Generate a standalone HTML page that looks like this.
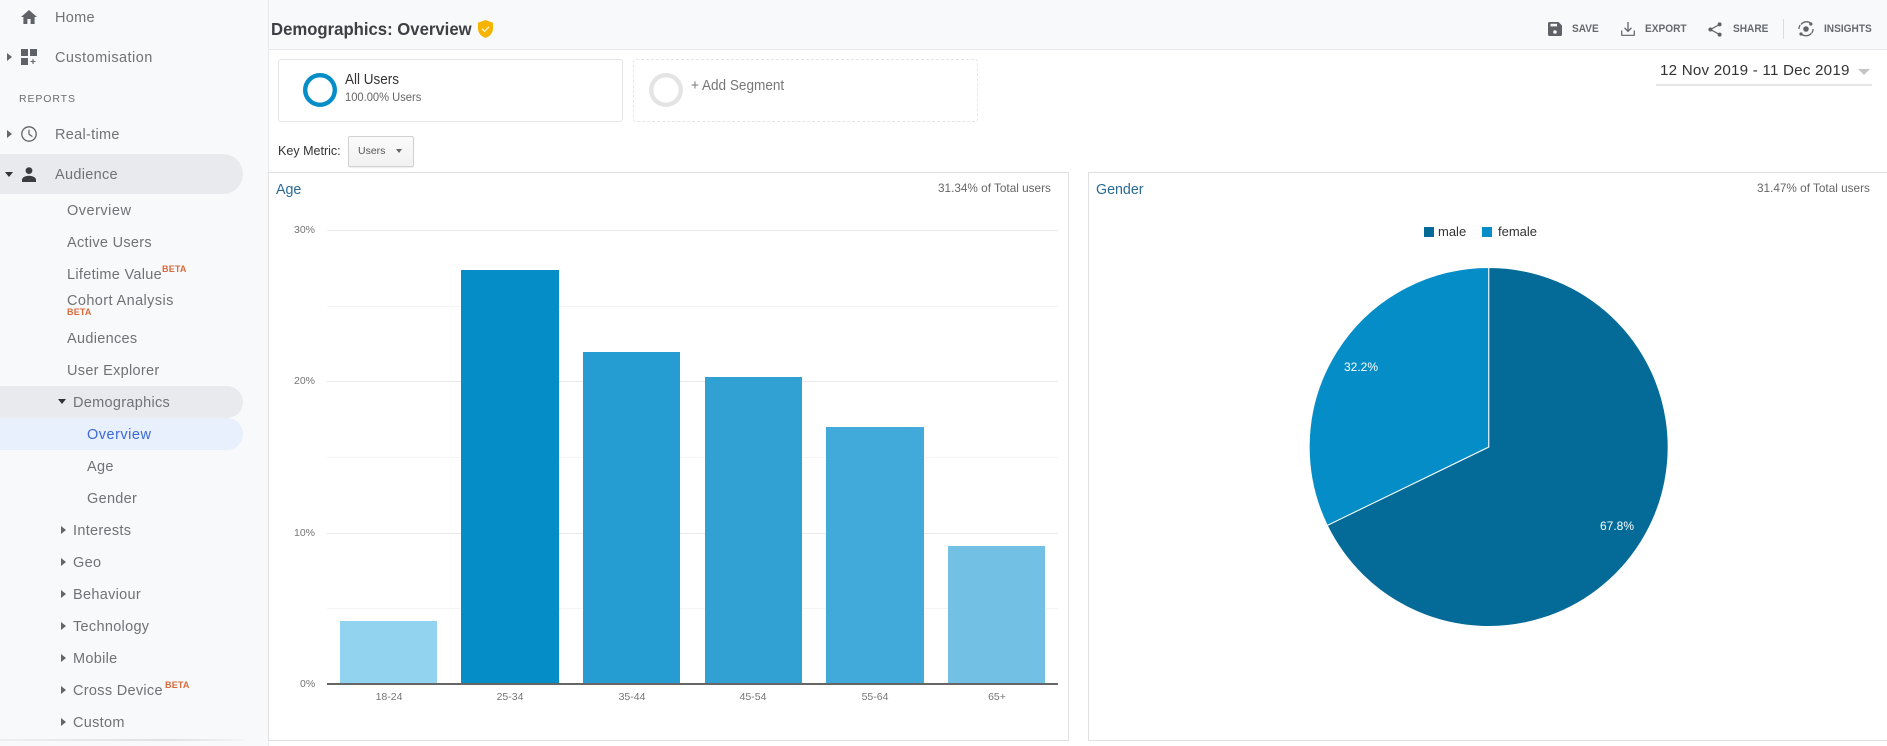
<!DOCTYPE html>
<html><head><meta charset="utf-8"><title>Demographics: Overview</title>
<style>
html,body{margin:0;padding:0;background:#fff}
body{width:1887px;height:746px;position:relative;overflow:hidden;font-family:"Liberation Sans",sans-serif}
.a{position:absolute}
.t{position:absolute;white-space:nowrap;line-height:20px;height:20px}
.n{font-size:14.5px;color:#6f7276;letter-spacing:.3px;margin-top:1px}
.b{font-size:9px;font-weight:bold;color:#d9693a;position:absolute;white-space:nowrap;line-height:10px;letter-spacing:.2px}
.tb{font-size:11px;font-weight:bold;color:#666a6e}
.ax{font-size:10.5px;color:#757575}
.xl{width:100px;text-align:center;top:687px}
.tr{width:0;height:0;position:absolute;border-style:solid;border-color:transparent}
.r{border-width:4px 0 4px 5px;border-left-color:#666}
.bar{position:absolute}
svg{position:absolute;overflow:visible}
</style></head><body>

<!-- sidebar -->
<div class="a" style="left:0;top:0;width:268px;height:746px;background:#f8f9fb;border-right:1px solid #e9eaec"></div>
<div class="a" style="left:0;top:739px;width:245px;height:2px;background:linear-gradient(90deg,#eceef0,#dfe1e4 70%,#f4f5f7)"></div>
<div class="a" style="left:0;top:154px;width:243px;height:40px;background:#e8eaed;border-radius:0 20px 20px 0"></div>
<div class="a" style="left:0;top:386px;width:243px;height:32px;background:#e8eaed;border-radius:0 16px 16px 0"></div>
<div class="a" style="left:0;top:418px;width:243px;height:32px;background:#e8f0fe;border-radius:0 16px 16px 0"></div>

<svg style="left:21px;top:9px" width="16" height="16" viewBox="0 0 16 16"><path d="M6.4 15V10h3.2v5h4V8h2.4L8 1 0 8h2.4v7z" fill="#5f6368"/></svg>
<svg style="left:21px;top:49px" width="16" height="16" viewBox="0 0 16 16"><path d="M0 0h7v7H0zM9 0h7v7H9zM0 9h7v7H0z" fill="#5f6368"/><path d="M12 10v5M9.500 12.500h5" stroke="#5f6368" stroke-width="1.100" fill="none"/></svg>
<svg style="left:21px;top:126px" width="16" height="16" viewBox="0 0 16 16"><circle cx="8" cy="8" r="7.200" fill="none" stroke="#5f6368" stroke-width="1.300"/><path d="M8 3.800V8.200l3.400 2.400" fill="none" stroke="#5f6368" stroke-width="1.200"/></svg>
<svg style="left:22px;top:167px" width="14" height="15" viewBox="0 0 14 15"><circle cx="7" cy="3.600" r="3.400" fill="#3a3d40"/><path d="M0 15v-2.200C0 10.200 4 8.800 7 8.800s7 1.400 7 4V15z" fill="#3a3d40"/></svg>

<div class="tr r" style="left:7px;top:53px"></div>
<div class="tr r" style="left:7px;top:130px"></div>
<div class="tr" style="left:5px;top:172px;border-width:5px 4.500px 0 4.500px;border-top-color:#333"></div>

<div class="t n" style="left:55px;top:7px">Home</div>
<div class="t n" style="left:55px;top:47px;letter-spacing:.45px">Customisation</div>
<div class="t" style="left:19px;top:89px;font-size:10.500px;color:#6a6d71;letter-spacing:.9px">REPORTS</div>
<div class="t n" style="left:55px;top:124px">Real-time</div>
<div class="t n" style="left:55px;top:164px">Audience</div>

<div class="t n" style="left:67px;top:200px;letter-spacing:.5px">Overview</div>
<div class="t n" style="left:67px;top:232px">Active Users</div>
<div class="t n" style="left:67px;top:264px">Lifetime Value</div>
<div class="b" style="left:162px;top:264px">BETA</div>
<div class="t n" style="left:67px;top:290px;letter-spacing:.4px">Cohort Analysis</div>
<div class="b" style="left:67px;top:307px">BETA</div>
<div class="t n" style="left:67px;top:328px">Audiences</div>
<div class="t n" style="left:67px;top:360px">User Explorer</div>

<div class="tr" style="left:58px;top:399px;border-width:5px 4.500px 0 4.500px;border-top-color:#333"></div>
<div class="t n" style="left:73px;top:392px">Demographics</div>
<div class="t n" style="left:87px;top:424px;color:#3b68d6;letter-spacing:.5px">Overview</div>
<div class="t n" style="left:87px;top:456px">Age</div>
<div class="t n" style="left:87px;top:488px">Gender</div>

<div class="tr r" style="left:61px;top:526px"></div><div class="t n" style="left:73px;top:520px">Interests</div>
<div class="tr r" style="left:61px;top:558px"></div><div class="t n" style="left:73px;top:552px">Geo</div>
<div class="tr r" style="left:61px;top:590px"></div><div class="t n" style="left:73px;top:584px">Behaviour</div>
<div class="tr r" style="left:61px;top:622px"></div><div class="t n" style="left:73px;top:616px">Technology</div>
<div class="tr r" style="left:61px;top:654px"></div><div class="t n" style="left:73px;top:648px">Mobile</div>
<div class="tr r" style="left:61px;top:686px"></div><div class="t n" style="left:73px;top:680px">Cross Device</div>
<div class="b" style="left:165px;top:680px">BETA</div>
<div class="tr r" style="left:61px;top:718px"></div><div class="t n" style="left:73px;top:712px">Custom</div>

<!-- top bar -->
<div class="a" style="left:269px;top:0;width:1618px;height:49px;background:#f8f9fb;border-bottom:1px solid #e6e7e9"></div>
<div class="a" style="left:269px;top:50px;width:1618px;height:122px;background:#fff"></div>
<div class="t" style="left:271px;top:19px;font-size:17.500px;font-weight:bold;color:#3c4043;transform-origin:0 50%;transform:scaleX(.955)">Demographics: Overview</div>
<svg style="left:478px;top:20px" width="15" height="18" viewBox="0 0 15 18"><path d="M7.500 0L15 2.800V8.500c0 4.300-3 7.800-7.500 9.500C3 16.300 0 12.800 0 8.500V2.800z" fill="#f4b400"/><path d="M4 8.800l2.600 2.600L11 6.800" fill="none" stroke="#fff" stroke-width="1.400" opacity=".8"/></svg>

<svg style="left:1548px;top:22px" width="14" height="14" viewBox="0 0 14 14"><path d="M0 1.500A1.500 1.500 0 0 1 1.500 0H10.500L14 3.500V12.500A1.500 1.500 0 0 1 12.500 14H1.500A1.500 1.500 0 0 1 0 12.500z" fill="#5f6368"/><rect x="2.500" y="1.800" width="6.500" height="2.600" fill="#f8f9fb"/><circle cx="7" cy="10" r="1.800" fill="#f8f9fb"/></svg>
<div class="t tb" style="left:1572px;top:19px;transform-origin:0 50%;transform:scaleX(.92)">SAVE</div>
<svg style="left:1621px;top:22px" width="14" height="14" viewBox="0 0 14 14"><path d="M7 0V9M3.500 5.800L7 9.300l3.500-3.500" fill="none" stroke="#5f6368" stroke-width="1.300"/><path d="M.7 8.500V13.300H13.300V8.500" fill="none" stroke="#5f6368" stroke-width="1.200"/></svg>
<div class="t tb" style="left:1645px;top:19px;transform-origin:0 50%;transform:scaleX(.92)">EXPORT</div>
<svg style="left:1708px;top:22px" width="14" height="15" viewBox="0 0 14 15"><path d="M11.500 2.500L2.500 7.500l9 5" fill="none" stroke="#5f6368" stroke-width="1.200"/><circle cx="11.600" cy="2.400" r="2" fill="#5f6368"/><circle cx="2.400" cy="7.500" r="2" fill="#5f6368"/><circle cx="11.600" cy="12.600" r="2" fill="#5f6368"/></svg>
<div class="t tb" style="left:1733px;top:19px;transform-origin:0 50%;transform:scaleX(.92)">SHARE</div>
<div class="a" style="left:1783px;top:19px;width:1px;height:20px;background:#dadcde"></div>
<svg style="left:1798px;top:21px" width="16" height="16" viewBox="0 0 16 16"><circle cx="8" cy="8" r="2.800" fill="#5f6368"/><path d="M3 3.500A7 7 0 0 1 14 3.500M13.400 12.200A7 7 0 0 1 2.600 12.200M.9 8A7 7 0 0 1 2.200 4M15.100 8A7 7 0 0 1 13.800 12" fill="none" stroke="#5f6368" stroke-width="1.300"/><circle cx="12.800" cy="3" r="1.600" fill="#5f6368"/><circle cx="3" cy="13" r="1.600" fill="#5f6368"/></svg>
<div class="t tb" style="left:1824px;top:19px;transform-origin:0 50%;transform:scaleX(.92)">INSIGHTS</div>

<!-- segments -->
<div class="a" style="left:278px;top:59px;width:343px;height:61px;border:1px solid #e6e6e6;border-radius:3px;background:#fff"></div>
<svg style="left:303px;top:73px" width="34" height="34"><circle cx="17" cy="17" r="14.800" fill="none" stroke="#058dc7" stroke-width="4.400"/></svg>
<div class="t" style="left:345px;top:70px;font-size:14.500px;color:#333;transform-origin:0 50%;transform:scaleX(.93)">All Users</div>
<div class="t" style="left:345px;top:87px;font-size:12px;color:#666;transform-origin:0 50%;transform:scaleX(.93)">100.00% Users</div>

<div class="a" style="left:633px;top:59px;width:343px;height:61px;border:1px dashed #e6e6e6;border-radius:3px;background:#fff"></div>
<svg style="left:649px;top:73px" width="34" height="34"><circle cx="17" cy="17" r="14.800" fill="none" stroke="#e4e4e4" stroke-width="4.400"/></svg>
<div class="t" style="left:691px;top:76px;font-size:14.600px;color:#777;transform-origin:0 50%;transform:scaleX(.93)">+ Add Segment</div>

<div class="t" style="left:278px;top:141px;font-size:13.200px;color:#333;transform-origin:0 50%;transform:scaleX(.95)">Key Metric:</div>
<div class="a" style="left:348px;top:136px;width:64px;height:29px;border:1px solid #d2d2d2;border-radius:2px;background:linear-gradient(#fafafa,#f1f1f1);box-shadow:0 1px 1px rgba(0,0,0,.08)"></div>
<div class="t" style="left:358px;top:141px;font-size:10.500px;color:#555">Users</div>
<div class="tr" style="left:396px;top:149px;border-width:4px 3.500px 0 3.500px;border-top-color:#666"></div>

<div class="t" style="left:1660px;top:61px;font-size:15.200px;color:#333;letter-spacing:.2px">12 Nov 2019 - 11 Dec 2019</div>
<div class="tr" style="left:1858px;top:69px;border-width:6px 6.500px 0 6.500px;border-top-color:#c4c4c4"></div>
<div class="a" style="left:1656px;top:84px;width:216px;height:1.500px;background:#e6e6e6"></div>

<!-- panels -->
<div class="a" style="left:268px;top:172px;width:799px;height:567px;border:1px solid #e0e0e0;background:#fff"></div>
<div class="a" style="left:1088px;top:172px;width:800px;height:567px;border:1px solid #e0e0e0;background:#fff"></div>
<div class="t" style="left:276px;top:180px;font-size:15px;color:#2b6a94;transform-origin:0 50%;transform:scaleX(.95)">Age</div>
<div class="t" style="left:1096px;top:180px;font-size:15px;color:#2b6a94;transform-origin:0 50%;transform:scaleX(.95)">Gender</div>
<div class="t" style="left:938px;top:178px;font-size:12px;color:#666;transform-origin:0 50%;transform:scaleX(.98)">31.34% of Total users</div>
<div class="t" style="left:1757px;top:178px;font-size:12px;color:#666;transform-origin:0 50%;transform:scaleX(.98)">31.47% of Total users</div>

<!-- age chart -->
<div class="a" style="left:327px;top:230px;width:731px;height:1px;background:#e9e9e9"></div>
<div class="a" style="left:327px;top:306px;width:731px;height:1px;background:#f4f4f4"></div>
<div class="a" style="left:327px;top:381px;width:731px;height:1px;background:#e9e9e9"></div>
<div class="a" style="left:327px;top:457px;width:731px;height:1px;background:#f4f4f4"></div>
<div class="a" style="left:327px;top:533px;width:731px;height:1px;background:#e9e9e9"></div>
<div class="a" style="left:327px;top:608px;width:731px;height:1px;background:#f4f4f4"></div>

<div class="bar" style="left:340px;top:621px;width:97px;height:62px;background:#92d3ef"></div>
<div class="bar" style="left:461px;top:270px;width:98px;height:413px;background:#058dc7"></div>
<div class="bar" style="left:583px;top:352px;width:97px;height:331px;background:#269dd2"></div>
<div class="bar" style="left:705px;top:377px;width:97px;height:306px;background:#30a1d2"></div>
<div class="bar" style="left:826px;top:427px;width:98px;height:256px;background:#42aada"></div>
<div class="bar" style="left:948px;top:546px;width:97px;height:137px;background:#72c0e4"></div>
<div class="a" style="left:327px;top:683px;width:731px;height:1.500px;background:#666"></div>

<div class="t ax" style="left:294px;top:220px">30%</div>
<div class="t ax" style="left:294px;top:371px">20%</div>
<div class="t ax" style="left:294px;top:523px">10%</div>
<div class="t ax" style="left:300px;top:674px">0%</div>
<div class="t ax xl" style="left:339px">18-24</div>
<div class="t ax xl" style="left:460px">25-34</div>
<div class="t ax xl" style="left:582px">35-44</div>
<div class="t ax xl" style="left:703px">45-54</div>
<div class="t ax xl" style="left:825px">55-64</div>
<div class="t ax xl" style="left:947px">65+</div>

<!-- pie -->
<div class="a" style="left:1424px;top:227px;width:10px;height:10px;background:#046b99"></div>
<div class="t" style="left:1438px;top:222px;font-size:13px;color:#333">male</div>
<div class="a" style="left:1482px;top:227px;width:10px;height:10px;background:#058dc7"></div>
<div class="t" style="left:1498px;top:222px;font-size:13px;color:#333">female</div>
<svg style="left:0;top:0" width="1887" height="746">
<path d="M1488.700 447V267.500A179.500 179.500 0 1 1 1327.200 525.400Z" fill="#046b99" stroke="#fff" stroke-width="1"/>
<path d="M1488.700 447L1327.200 525.400A179.500 179.500 0 0 1 1488.700 267.500Z" fill="#058dc7" stroke="#fff" stroke-width="1"/>
</svg>
<div class="t" style="left:1344px;top:357px;font-size:12px;color:#fff">32.2%</div>
<div class="t" style="left:1600px;top:516px;font-size:12px;color:#fff">67.8%</div>
</body></html>
